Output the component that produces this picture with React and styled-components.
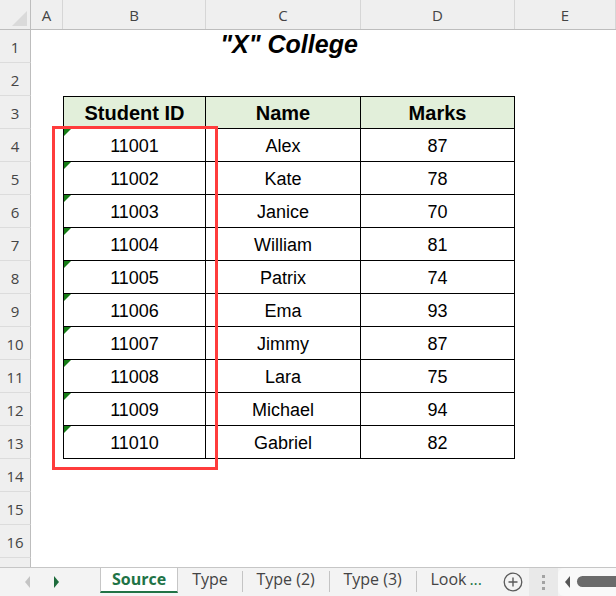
import React from 'react'
import styled, { createGlobalStyle } from 'styled-components'

const Global = createGlobalStyle`
  html, body { margin: 0; padding: 0; background: #fff; }
  * { box-sizing: border-box; }
`

const COLS = '31px 32px 143px 155px 154px 1fr'

const Page = styled.div`
  width: 616px;
  height: 596px;
  display: flex;
  flex-direction: column;
  overflow: hidden;
  background: #fff;
`

const HeadRow = styled.div`
  display: grid;
  grid-template-columns: ${COLS};
  height: 30px;
  background: #efefef;
  border-bottom: 1px solid #bdbdbd;
`

const ColHead = styled.div`
  display: flex;
  align-items: center;
  justify-content: center;
  position: relative;
  border-right: 1px solid ${p => (p.$corner ? '#bdbdbd' : '#d6d6d6')};
  color: #444;
  font-family: "Open Sans", "Noto Sans", sans-serif;
  font-size: 15px;
  padding-top: 1px;
`

const CornerTri = styled.div`
  position: absolute;
  right: 3px;
  bottom: 3px;
  width: 0;
  height: 0;
  border-left: 15px solid transparent;
  border-bottom: 15px solid #dadada;
`

const Sheet = styled.div`
  position: relative;
  height: 537px;
  overflow: hidden;
`

const Row = styled.div`
  display: grid;
  grid-template-columns: ${COLS};
  height: 33px;
`

const RowNum = styled.div`
  display: flex;
  align-items: center;
  justify-content: center;
  background: #efefef;
  border-right: 1px solid #bdbdbd;
  border-bottom: 1px solid #dcdcdc;
  color: #444;
  font-family: "Open Sans", "Noto Sans", sans-serif;
  font-size: 15px;
  padding-top: 2px;
`

const Blank = styled.div``

const Title = styled.div`
  grid-column: span 3;
  display: flex;
  align-items: center;
  justify-content: center;
  padding: 0 0 4px 0;
  font-family: "Liberation Sans", Arial, sans-serif;
  font-weight: bold;
  font-style: italic;
  font-size: 25px;
  color: #000;
`

const Cell = styled.div`
  position: relative;
  display: flex;
  align-items: center;
  justify-content: center;
  font-family: "Liberation Sans", Arial, sans-serif;
  font-size: ${p => (p.$head ? '20px' : '18px')};
  font-weight: ${p => (p.$head ? 'bold' : 'normal')};
  color: #000;
  background: ${p => (p.$head ? '#e2efda' : '#fff')};
  border-right: 1px solid #000;
  border-bottom: 1px solid #000;
  border-left: ${p => (p.$first ? '1px solid #000' : 'none')};
  border-top: ${p => (p.$head ? '1px solid #000' : 'none')};
  padding-top: 2px;

  &::before {
    content: '';
    display: ${p => (p.$flag ? 'block' : 'none')};
    position: absolute;
    top: 0;
    left: 0;
    width: 0;
    height: 0;
    border-top: 7px solid #167d16;
    border-right: 7px solid transparent;
  }
`

const Highlight = styled.div`
  position: absolute;
  left: 52px;
  top: 96px;
  width: 166px;
  height: 344px;
  border: 3px solid #ff3c3c;
  pointer-events: none;
`

const TabBar = styled.div`
  height: 29px;
  display: flex;
  background: #f3f3f3;
  border-top: 1px solid #c6c6c6;
  font-family: "Open Sans", "Noto Sans", sans-serif;
  font-size: 16px;
  color: #444;
`

const Nav = styled.div`
  width: 100px;
  display: flex;
  align-items: center;
  padding: 0 0 0 25px;
  gap: 24px;
`

const Arrow = styled.div`
  width: 0;
  height: 0;
  border-top: 6px solid transparent;
  border-bottom: 6px solid transparent;
  ${p => (p.$dir === 'left'
    ? `border-right: 5px solid ${p.$color};`
    : `border-left: 5px solid ${p.$color};`)}
`

const Tabs = styled.div`
  flex: 1;
  display: flex;
  align-items: flex-start;
  overflow: hidden;
`

const Tab = styled.div`
  height: 26px;
  margin-top: -1px;
  display: flex;
  align-items: center;
  padding: 0 ${p => (p.$active ? '11px' : '14px')};
  white-space: nowrap;
  background: ${p => (p.$active ? '#fff' : 'transparent')};
  color: ${p => (p.$active ? '#217346' : '#444')};
  font-weight: ${p => (p.$active ? 'bold' : 'normal')};
  border-left: ${p => (p.$active ? '1px solid #c6c6c6' : 'none')};
  border-right: ${p => (p.$active ? '1px solid #c6c6c6' : 'none')};
  border-bottom: ${p => (p.$active ? '2px solid #217346' : '2px solid transparent')};
`

const Sep = styled.div`
  width: 1px;
  height: 21px;
  margin-top: 3px;
  background: #c4c4c4;
`

const Clip = styled.span`
  display: inline-block;
  width: 37px;
  overflow: hidden;
`

const More = styled.span`
  color: #217346;
  margin-left: 2px;
`

const PlusBtn = styled.div`
  width: 33px;
  display: flex;
  align-items: center;
  justify-content: center;
  padding-bottom: 1px;
`

const DotsArea = styled.div`
  width: 29px;
  background: #e9e9e9;
  display: flex;
  flex-direction: column;
  align-items: center;
  justify-content: center;
  gap: 3px;
`

const Dot = styled.div`
  width: 3px;
  height: 3px;
  background: #a3a3a3;
`

const Scroll = styled.div`
  width: 58px;
  display: flex;
  align-items: center;
  padding-left: 7px;
  gap: 7px;
  background: #f9f9f9;
  border-radius: 6px 0 0 6px;
`

const Thumb = styled.div`
  flex: 1;
  height: 11px;
  margin-top: -2px;
  border-radius: 6px 0 0 6px;
  background: #6b6b6b;
`

const students = [
  ['11001', 'Alex', 87],
  ['11002', 'Kate', 78],
  ['11003', 'Janice', 70],
  ['11004', 'William', 81],
  ['11005', 'Patrix', 74],
  ['11006', 'Ema', 93],
  ['11007', 'Jimmy', 87],
  ['11008', 'Lara', 75],
  ['11009', 'Michael', 94],
  ['11010', 'Gabriel', 82],
]

function renderRow(r) {
  if (r === 1) {
    return (
      <>
        <Blank />
        <Title>"X" College</Title>
        <Blank />
      </>
    )
  }
  if (r === 3) {
    return (
      <>
        <Blank />
        <Cell $head $first>Student ID</Cell>
        <Cell $head>Name</Cell>
        <Cell $head>Marks</Cell>
        <Blank />
      </>
    )
  }
  if (r >= 4 && r <= 13) {
    const s = students[r - 4]
    return (
      <>
        <Blank />
        <Cell $first $flag>{s[0]}</Cell>
        <Cell>{s[1]}</Cell>
        <Cell>{s[2]}</Cell>
        <Blank />
      </>
    )
  }
  return (
    <>
      <Blank /><Blank /><Blank /><Blank /><Blank />
    </>
  )
}

export default function App() {
  const rows = Array.from({ length: 17 }, (_, i) => i + 1)

  return (
    <Page>
      <Global />
      <HeadRow>
        <ColHead $corner><CornerTri /></ColHead>
        {['A', 'B', 'C', 'D', 'E'].map(c => <ColHead key={c}>{c}</ColHead>)}
      </HeadRow>

      <Sheet>
        {rows.map(r => (
          <Row key={r}>
            {/* row 17 is only a sliver above the tab bar, its number is hidden */}
            <RowNum>{r < 17 ? r : ''}</RowNum>
            {renderRow(r)}
          </Row>
        ))}
        <Highlight />
      </Sheet>

      <TabBar>
        <Nav>
          <Arrow $dir="left" $color="#c4c4c4" />
          <Arrow $dir="right" $color="#1d6b3b" />
        </Nav>
        <Tabs>
          <Tab $active>Source</Tab>
          <Tab>Type</Tab>
          <Sep />
          <Tab>Type (2)</Tab>
          <Sep />
          <Tab>Type (3)</Tab>
          <Sep />
          <Tab><Clip>Look</Clip><More>...</More></Tab>
        </Tabs>
        <PlusBtn>
          <svg width="20" height="20" viewBox="0 0 20 20">
            <circle cx="10" cy="10" r="8.8" fill="none" stroke="#5a5a5a" strokeWidth="1.3" />
            <path d="M10 5.5v9M5.5 10h9" stroke="#5a5a5a" strokeWidth="1.4" />
          </svg>
        </PlusBtn>
        <DotsArea>
          <Dot /><Dot /><Dot />
        </DotsArea>
        <Scroll>
          <Arrow $dir="left" $color="#555" />
          <Thumb />
        </Scroll>
      </TabBar>
    </Page>
  )
}
